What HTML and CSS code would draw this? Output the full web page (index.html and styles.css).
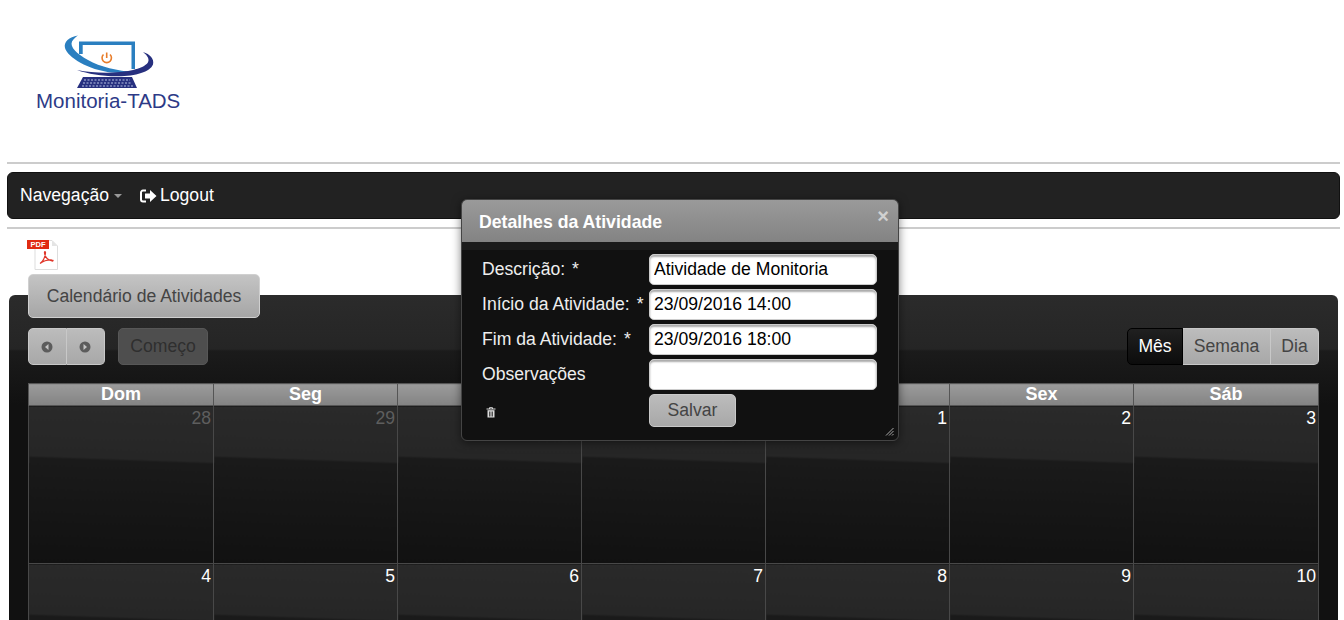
FILE: index.html
```html
<!DOCTYPE html>
<html lang="en">

<head>
    <meta charset="UTF-8">
    <title>Monitoria-TADS</title>
    <link rel="stylesheet" href="styles.css">
</head>

<body>
    <div class="page">
        <div class="brand">
            <svg class="brand-mark" width="100" height="60" viewBox="60 30 100 60">
                <path d="M79 54V41.500H135V69H131.500V45H82.700V54Z" fill="#2a7fc0"/>
                <path d="M78 35.500C69 37 63.500 42 65 48C67.500 57 88 70 112 72.500C120 73.300 128 73 134 72C118 71 100 67 88 60C77 54 69.500 47 72 41.500C73.500 39 75.500 37 78 35.500Z" fill="#2a7fc0"/>
                <path d="M143 52C150 54 154.500 59 153 64.500C150 72 136 76 118 76.300C103 76.500 88 74 77 70C90 72.500 106 73.500 120 72C135 70.500 148 66.500 148.500 60.500C148.700 57 146 54.500 143 52Z" fill="#27307f"/>
                <path d="M83 77H132L137 88H77Z" fill="#27307f"/>
                <path d="M84 80H130M83 83H132M82 86H134" stroke="#b9c3e6" stroke-width="1" stroke-dasharray="2 1.500"/>
                <path d="M103.500 54.500A4.700 4.700 0 1 0 110 54.500" fill="none" stroke="#e87d2b" stroke-width="1.600"/>
                <path d="M106.700 52.500V58" stroke="#e87d2b" stroke-width="1.600"/>
            </svg>
            <div class="brand-name">Monitoria-TADS</div>
        </div>
        <hr>
        <nav class="navbar">
            <a class="nav-link">Navegação<span class="caret"></span></a>
            <a class="nav-link">
                <svg class="logout-icon" width="17" height="14" viewBox="0 0 17 14">
                    <path d="M6 1.500H3A2 2 0 0 0 1 3.500V10.500A2 2 0 0 0 3 12.500H6" fill="none" stroke="#fff" stroke-width="2"/>
                    <path d="M5 4.500H10V1L16.500 7L10 13V9.500H5Z" fill="#fff"/>
                </svg>Logout
            </a>
        </nav>
        <hr>
        <div class="pdf-row">
            <svg width="32" height="31" viewBox="0 0 32 31">
                <path d="M8 0.500H25L30.500 6V29.500H8Z" fill="#fff" stroke="#ddd"/>
                <path d="M25 0.500V6H30.500Z" fill="#e4e4e4"/>
                <rect x="0" y="0" width="22" height="9" fill="#e02b12"/>
                <text x="11" y="7" class="pdf-text">PDF</text>
                <path d="M13 23.500C16 21.500 18 17 18.500 13C18.700 11 17.200 11 17.500 13C18 17 21 20 25 21C26.500 21.300 26.500 20 25 20C21 19.800 16 21.300 13 23.500Z" fill="none" stroke="#e0362a" stroke-width="1.200"/>
            </svg>
        </div>
        <section class="calendar">
            <div class="calendar-tab">Calendário de Atividades</div>
            <div class="toolbar">
                <div class="toolbar-left">
                    <div class="btn-group">
                        <button class="btn btn-icon">
                            <svg width="12" height="12" viewBox="0 0 12 12">
                                <circle cx="6" cy="6" r="5.500" fill="#5c5c5c"/>
                                <path d="M7.500 3V9L4 6Z" fill="#c4c4c4"/>
                            </svg>
                        </button>
                        <button class="btn btn-icon">
                            <svg width="12" height="12" viewBox="0 0 12 12">
                                <circle cx="6" cy="6" r="5.500" fill="#5c5c5c"/>
                                <path d="M4.500 3V9L8 6Z" fill="#c4c4c4"/>
                            </svg>
                        </button>
                    </div>
                    <button class="btn btn-disabled">Começo</button>
                </div>
                <div class="btn-group">
                    <button class="btn btn-active">Mês</button>
                    <button class="btn btn-week">Semana</button>
                    <button class="btn btn-day">Dia</button>
                </div>
            </div>
            <table class="month">
                <thead>
                    <tr>
                        <th>Dom</th>
                        <th>Seg</th>
                        <th>Ter</th>
                        <th>Qua</th>
                        <th>Qui</th>
                        <th>Sex</th>
                        <th>Sáb</th>
                    </tr>
                </thead>
                <tbody>
                    <tr>
                        <td class="other">28</td>
                        <td class="other">29</td>
                        <td class="other">30</td>
                        <td class="other">31</td>
                        <td>1</td>
                        <td>2</td>
                        <td>3</td>
                    </tr>
                    <tr>
                        <td>4</td>
                        <td>5</td>
                        <td>6</td>
                        <td>7</td>
                        <td>8</td>
                        <td>9</td>
                        <td>10</td>
                    </tr>
                </tbody>
            </table>
        </section>
    </div>

    <div class="dialog">
        <div class="dialog-title">
            <span>Detalhes da Atividade</span>
            <span class="dialog-close">×</span>
        </div>
        <form class="dialog-form">
            <label>Descrição:<span class="req">*</span></label>
            <input type="text" value="Atividade de Monitoria">
            <label>Início da Atividade:<span class="req">*</span></label>
            <input type="text" value="23/09/2016 14:00">
            <label>Fim da Atividade:<span class="req">*</span></label>
            <input type="text" value="23/09/2016 18:00">
            <label>Observações</label>
            <input type="text">
            <div class="trash">
                <svg width="10" height="11" viewBox="0 0 10 11">
                    <path d="M0.500 2H9.500M3.500 2V0.700H6.500V2" fill="none" stroke="#ddd" stroke-width="1"/>
                    <path d="M1.500 3.200H8.500V10.500H1.500Z" fill="#ddd"/>
                    <path d="M3.500 4.500V9.500M5 4.500V9.500M6.500 4.500V9.500" stroke="#111" stroke-width="0.700"/>
                </svg>
            </div>
            <div><button type="button" class="btn btn-save">Salvar</button></div>
        </form>
        <svg class="resize-grip" width="9" height="9" viewBox="0 0 9 9">
            <path d="M8.500 1L1 8.500M8.500 4L4 8.500M8.500 7L7 8.500" stroke="#aaa" stroke-width="1"/>
        </svg>
    </div>
</body>

</html>
```

FILE: styles.css
```css
html,
body {
    margin: 0;
    padding: 0;
    height: 620px;
    overflow: hidden;
    background: #fff;
    font-family: "Liberation Sans", Arial, sans-serif;
    font-size: 17.600px;
    color: #333;
}

.page {
    position: relative;
    height: 620px;
    padding: 0 4px 0 7px;
    overflow: hidden;
}

hr {
    height: 2px;
    margin: 0;
    border: none;
    background: #ccc;
}

.brand {
    height: 162px;
    box-sizing: border-box;
    padding-top: 30px;
    margin-left: -7px;
}

.brand-mark {
    display: block;
    margin-left: 60px;
}

.brand-name {
    margin-left: 36px;
    margin-top: -1px;
    font-size: 20.500px;
    line-height: 24px;
    color: #2d3a87;
}

/* navbar */
.navbar {
    display: flex;
    align-items: center;
    gap: 18px;
    height: 47px;
    margin: 8px 0;
    padding: 0 12px;
    box-sizing: border-box;
    background: #222;
    border: 1px solid #111;
    border-radius: 6px;
}

.nav-link {
    display: flex;
    align-items: center;
    color: #fff;
}

.caret {
    width: 0;
    height: 0;
    margin-left: 5px;
    border-top: 4px solid #999;
    border-left: 4px solid transparent;
    border-right: 4px solid transparent;
}

.logout-icon {
    margin-right: 3px;
}

.pdf-row {
    height: 45px;
    margin: 11px 0 0 20px;
    box-sizing: border-box;
}

.pdf-row svg {
    display: block;
}

.pdf-text {
    font-family: "Liberation Sans", Arial, sans-serif;
    font-size: 7.500px;
    font-weight: bold;
    fill: #fff;
    text-anchor: middle;
}

/* calendar */
.calendar {
    display: flow-root;
    margin: 10px 2px 0;
    padding: 0 19px;
    height: 400px;
    border-radius: 6px 6px 0 0;
    background: linear-gradient(#2b2b2b, #252525 54px, #1b1b1b 56px, #111 110px);
}

.calendar-tab {
    width: 232px;
    height: 44px;
    margin-top: -21px;
    box-sizing: border-box;
    line-height: 42px;
    text-align: center;
    color: #444;
    border: 1px solid #d0d0d0;
    border-radius: 5px;
    background: linear-gradient(#c4c4c4, #a6a6a6);
}

.toolbar {
    display: flex;
    justify-content: space-between;
    margin-top: 10px;
}

.toolbar-left {
    display: flex;
    gap: 13px;
}

.btn-group {
    display: flex;
}

.btn {
    height: 37px;
    margin: 0;
    padding: 0;
    font: inherit;
    color: #444;
    border: 1px solid #c8c8c8;
    background: linear-gradient(#bcbcbc, #a8a8a8);
}

.btn-icon {
    display: flex;
    align-items: center;
    justify-content: center;
    width: 39px;
    padding-right: 2px;
}

.btn-icon:first-child {
    border-radius: 5px 0 0 5px;
}

.btn-icon:last-child {
    width: 38px;
    border-left: none;
    border-radius: 0 5px 5px 0;
}

.btn-disabled {
    width: 90px;
    color: #2f2f2f;
    border: 1px solid #575757;
    border-radius: 5px;
    background: #4e4e4e;
}

.btn-active {
    width: 56px;
    color: #fff;
    border: 1px solid #000;
    border-radius: 5px 0 0 5px;
    background: linear-gradient(#202020, #0c0c0c);
}

.btn-week {
    width: 88px;
    border-left: none;
}

.btn-day {
    width: 48px;
    border-left: none;
    border-radius: 0 5px 5px 0;
}

.month {
    width: 1290px;
    margin-top: 18px;
    table-layout: fixed;
    border-collapse: collapse;
}

.month th {
    width: 184px;
    height: 22px;
    padding: 0;
    box-sizing: border-box;
    line-height: 19px;
    font-size: 18px;
    font-weight: bold;
    color: #fff;
    border: 1px solid #555;
    background: linear-gradient(#9b9b9b, #838383);
}

.month th:first-child,
.month th:last-child {
    width: 185px;
}

.month td {
    height: 158px;
    padding: 2px 2px 0 0;
    box-sizing: border-box;
    vertical-align: top;
    text-align: right;
    line-height: 21px;
    color: #fff;
    border: 1px solid #484848;
    background: linear-gradient(182deg, #2a2a2a, #262626 34%, #1a1a1a 35.200%, #111 100%);
}

.month td.other {
    color: #5e5e5e;
}

/* dialog over the calendar */
.dialog {
    position: absolute;
    left: 461px;
    top: 199px;
    width: 438px;
    height: 242px;
    box-sizing: border-box;
    border: 1px solid #444;
    border-radius: 6px;
    background: linear-gradient(#1b1b1b 50px, #111 50px);
    box-shadow: 0 2px 10px rgba(0, 0, 0, 0.5);
}

.dialog-title {
    display: flex;
    justify-content: space-between;
    height: 42px;
    padding: 0 9px 0 17px;
    box-sizing: border-box;
    line-height: 44px;
    font-size: 17.700px;
    font-weight: bold;
    color: #fff;
    border-radius: 5px 5px 0 0;
    background: linear-gradient(#9a9a9a, #838383);
}

.dialog-close {
    line-height: 32px;
    font-size: 20px;
    color: #d0d0d0;
}

.dialog-form {
    display: grid;
    grid-template-columns: 167px 228px;
    grid-auto-rows: 31px;
    row-gap: 4px;
    padding: 12px 0 0 20px;
}

.dialog-form label {
    line-height: 30px;
    color: #eee;
    white-space: nowrap;
}

.req {
    margin-left: 7px;
}

.dialog-form input {
    width: 228px;
    height: 31px;
    box-sizing: border-box;
    padding: 0 4px;
    font: inherit;
    color: #000;
    border: 1px solid #ccc;
    border-radius: 5px;
    background: #fff;
    box-shadow: inset 0 2px 2px #aaa;
}

.trash {
    padding: 13px 0 0 4px;
}

.trash svg {
    display: block;
}

.btn-save {
    width: 87px;
    height: 33px;
    border-radius: 5px;
}

.resize-grip {
    position: absolute;
    right: 4px;
    bottom: 4px;
}
```
